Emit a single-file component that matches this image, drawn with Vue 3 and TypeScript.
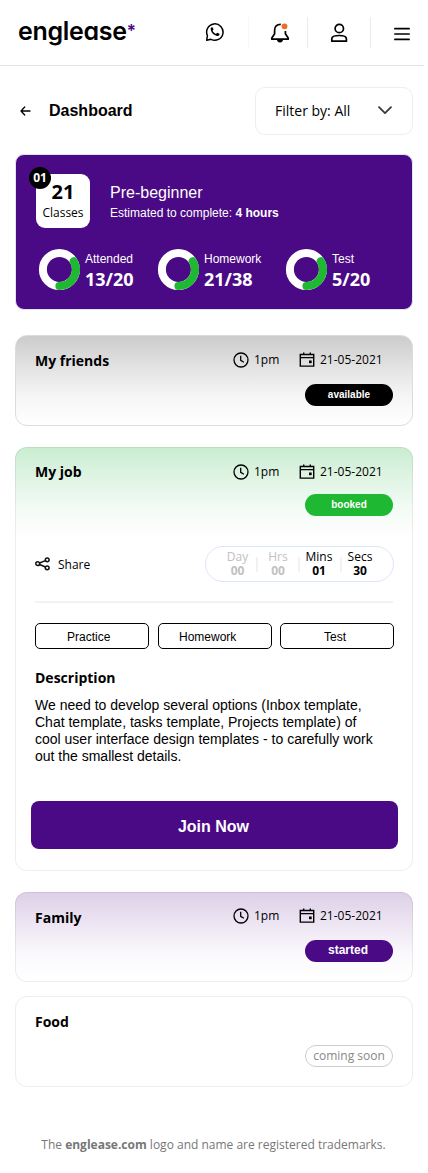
<script setup lang="ts">
interface Stat { label: string; value: string }
interface Lesson {
  id: string
  title: string
  status: string
  time?: string
  date?: string
}
interface Unit { label: string; value: string; muted: boolean }

const stats: Stat[] = [
  { label: 'Attended', value: '13/20' },
  { label: 'Homework', value: '21/38' },
  { label: 'Test', value: '5/20' },
]

const lessons: Lesson[] = [
  { id: 'friends', title: 'My friends', status: 'available', time: '1pm', date: '21-05-2021' },
  { id: 'job', title: 'My job', status: 'booked', time: '1pm', date: '21-05-2021' },
  { id: 'family', title: 'Family', status: 'started', time: '1pm', date: '21-05-2021' },
  { id: 'food', title: 'Food', status: 'coming soon' },
]

const countdown: Unit[] = [
  { label: 'Day', value: '00', muted: true },
  { label: 'Hrs', value: '00', muted: true },
  { label: 'Mins', value: '01', muted: false },
  { label: 'Secs', value: '30', muted: false },
]

const tabs: string[] = ['Practice', 'Homework', 'Test']
</script>

<template>
  <div class="page">
    <header class="topbar">
      <div class="logo">englease<span class="star">*</span></div>
      <nav class="actions">
        <button class="action whatsapp" aria-label="WhatsApp">
          <svg width="20" height="20" viewBox="0 0 20 20" fill="none">
            <path d="M1.7 18.3l.7-4.8A8.2 8.2 0 1 1 6 17.300z" stroke="#000" stroke-width="1.500" stroke-linejoin="round" />
            <path d="M6.900 5.300c-.9.3-1.400 1.200-1.200 2.200.6 3.200 3 5.700 6.300 6.500 1 .2 2-.3 2.400-1.200l.1-1-2.300-1.100-1.300 1.200c-1.600-.7-2.700-1.800-3.300-3.200l1-1.200-.9-2.100z" fill="#000" />
          </svg>
        </button>
        <button class="action bell" aria-label="Notifications">
          <svg width="20" height="20" viewBox="0 0 20 20" fill="none">
            <path d="M10.800 1.300C6.700 1.200 4.600 3.700 4.600 7.200v3.600L1.800 15v1.200h16.400V15l-2.800-4.200V8" stroke="#000" stroke-width="1.700" stroke-linejoin="round" />
            <path d="M7 16.500h6c0 1.800-1.300 3.100-3 3.100s-3-1.300-3-3.100z" fill="#000" />
            <circle cx="14.500" cy="3.300" r="2.900" fill="#f26a21" />
          </svg>
        </button>
        <button class="action user" aria-label="Account">
          <svg width="18" height="20" viewBox="0 0 18 20" fill="none" stroke="#000" stroke-width="1.700">
            <circle cx="9.300" cy="5.500" r="4.200" />
            <path d="M1.800 18.200v-2.400c0-2.100 3.300-3.300 7.300-3.300s7.300 1.200 7.300 3.300v2.400z" stroke-linejoin="round" />
          </svg>
        </button>
        <button class="action menu" aria-label="Menu">
          <svg width="16" height="14" viewBox="0 0 16 14" stroke="#000" stroke-width="1.700" stroke-linecap="round">
            <path d="M.9 1.700h14.200M.9 7h14.200M.9 12.400h14.200" />
          </svg>
        </button>
      </nav>
    </header>

    <div class="heading">
      <svg class="back" width="11" height="10" viewBox="0 0 11 10" fill="none" stroke="#000" stroke-width="1.300" stroke-linecap="round" stroke-linejoin="round">
        <path d="M10 5H1M4.700 1L1 5l3.700 4" />
      </svg>
      <h1>Dashboard</h1>
      <button class="filter">
        <span>Filter by: All</span>
        <svg width="14" height="9" viewBox="0 0 14 9" fill="none" stroke="#353540" stroke-width="1.700" stroke-linecap="round" stroke-linejoin="round">
          <path d="M1 1.200l6 6 6-6" />
        </svg>
      </button>
    </div>

    <section class="summary">
      <div class="level">
        <div class="classes">
          <span class="index">01</span>
          <strong>21</strong>
          <span>Classes</span>
        </div>
        <div class="about">
          <h2>Pre-beginner</h2>
          <p>Estimated to complete: <b>4 hours</b></p>
        </div>
      </div>
      <div class="stats">
        <div v-for="s in stats" :key="s.label" class="stat">
          <svg width="42" height="42" viewBox="0 0 42 42" fill="none">
            <circle cx="21.400" cy="21.400" r="16.500" stroke="#fff" stroke-width="8" />
            <path d="M35.700 13.200A16.500 16.500 0 0 1 21.400 37.900" stroke="#1eb833" stroke-width="8" stroke-linecap="round" />
          </svg>
          <div class="figures">
            <span>{{ s.label }}</span>
            <strong>{{ s.value }}</strong>
          </div>
        </div>
      </div>
    </section>

    <article v-for="l in lessons" :key="l.id" class="lesson" :class="l.id">
      <div class="lesson-head">
        <h3>{{ l.title }}</h3>
        <div v-if="l.time" class="when">
          <svg width="16" height="16" viewBox="0 0 16 16" fill="none" stroke="#000" stroke-width="1.300">
            <circle cx="8" cy="8" r="7" />
            <path d="M7.700 3.800v4.500l3.200 2" />
          </svg>
          <span class="time">{{ l.time }}</span>
          <svg width="16" height="16" viewBox="0 0 16 16" fill="none">
            <path d="M1.300 2.500h13.400v11.600H1.300z" stroke="#000" stroke-width="1.400" />
            <path d="M1.300 5.600h13.400M4.700.4v2.100M11.300.4v2.100" stroke="#000" stroke-width="1.400" />
            <path d="M10 8.500h2.700v2.700H10z" fill="#000" />
          </svg>
          <span>{{ l.date }}</span>
        </div>
      </div>
      <div class="badge">{{ l.status }}</div>

      <template v-if="l.id === 'job'">
        <div class="share-row">
          <div class="share">
            <svg width="16" height="14" viewBox="0 0 16 14" fill="none" stroke="#111" stroke-width="1.500">
              <circle cx="2.700" cy="6.700" r="1.900" />
              <circle cx="12.200" cy="2.800" r="1.900" />
              <circle cx="12.200" cy="10.800" r="1.900" />
              <path d="M4.600 6l5.800-2.400M4.600 7.500l5.800 2.500" />
            </svg>
            <span>Share</span>
          </div>
          <div class="countdown">
            <div v-for="u in countdown" :key="u.label" class="unit" :class="{ muted: u.muted }">
              <span>{{ u.label }}</span>
              <b>{{ u.value }}</b>
            </div>
          </div>
        </div>
        <div class="tabs">
          <button v-for="t in tabs" :key="t" :class="t.toLowerCase()">{{ t }}</button>
        </div>
        <h4>Description</h4>
        <p class="text">
          We need to develop several options (Inbox template,<br>
          Chat template, tasks template, Projects template) of<br>
          cool user interface design templates - to carefully work<br>
          out the smallest details.
        </p>
        <button class="join">Join Now</button>
      </template>
    </article>

    <footer>The <b>englease.com</b> logo and name are registered trademarks.</footer>
  </div>
</template>

<style>
body { margin: 0; background: #fff; }
</style>

<style scoped>
* { box-sizing: border-box; }
h1, h2, h3, h4, p { margin: 0; }
button { margin: 0; padding: 0; border: 0; background: none; font: inherit; color: inherit; }
svg { display: block; flex: none; }
.page {
  width: 428px;
  height: 1173px;
  overflow: hidden;
  color: #000;
  background: #fff;
  font-family: "Open Sans", "Noto Sans", sans-serif;
  font-size: 12px;
}
.topbar {
  display: flex;
  width: 424px;
  height: 66px;
  padding-left: 18px;
  border-bottom: 1px solid #e5e5e5;
}
.logo {
  width: 168px;
  padding-top: 16px;
  font-family: Inter, "Liberation Sans", sans-serif;
  font-size: 25px;
  line-height: 30px;
  font-weight: 600;
  letter-spacing: -0.3px;
  font-feature-settings: "cv11";
  white-space: nowrap;
}
.star { color: #4b0a85; font-size: 17px; line-height: 0; vertical-align: 3px; }
.actions { display: flex; height: 31px; margin-top: 17px; }
.action { display: flex; align-items: center; justify-content: flex-start; height: 31px; }
.whatsapp { width: 62px; padding: 0 0 2px 19px; }
.bell { width: 59px; padding-left: 21px; border-left: 1px solid #f7f7f7; }
.user { width: 63px; padding-left: 22px; border-left: 1px solid #ebebeb; }
.menu { width: 53px; padding: 2px 0 0 23px; border-left: 1px solid #ebebeb; }
.heading { display: flex; align-items: center; height: 48px; margin: 21px 15px 0 20px; }
h1 {
  flex: 1;
  margin-left: 18px;
  font: bold 16px/20px "Liberation Sans", sans-serif;
}
.filter {
  display: flex;
  align-items: center;
  justify-content: space-between;
  width: 158px;
  height: 48px;
  padding: 0 20px 1px 19px;
  border: 1px solid #eee;
  border-radius: 10px;
  font-size: 14px;
}
.summary {
  height: 156px;
  margin: 19px 15px 0;
  padding: 19px 20px 0;
  border: 1px solid #dce6fb;
  border-radius: 9px;
  color: #fff;
  background: #4b0a85;
}
.level { display: flex; }
.classes {
  position: relative;
  display: flex;
  flex-direction: column;
  align-items: center;
  width: 54px;
  height: 54px;
  padding-top: 6px;
  border-radius: 9px;
  color: #000;
  background: #fff;
}
.classes strong { font-size: 20px; line-height: 23px; }
.classes span:last-child { line-height: 20px; }
.index {
  position: absolute;
  left: -7px;
  top: -7px;
  width: 22px;
  height: 22px;
  border-radius: 50%;
  color: #fff;
  background: #000;
  font-size: 12px;
  line-height: 21px;
  font-weight: bold;
  text-align: center;
}
.about { padding: 9px 0 0 20px; font-family: "Liberation Sans", sans-serif; }
.about h2 { font-size: 16px; line-height: 20px; font-weight: normal; }
.about p { margin-top: 3px; font-size: 12px; line-height: 15px; }
.stats { display: grid; grid-template-columns: 119px 128px 1fr; padding: 20px 0 0 2px; }
.stat { display: flex; align-items: center; gap: 5px; height: 42px; }
.figures { padding-top: 5px; }
.stat span { display: block; font: 12px/15px "Liberation Sans", sans-serif; }
.stat strong { display: block; font-size: 18px; line-height: 24px; }
.lesson {
  height: 91px;
  margin: 0 15px;
  padding: 13px 19px 0;
  border: 1px solid #ededed;
  border-radius: 12px;
  background-origin: border-box;
  background-repeat: no-repeat;
}
.lesson-head { display: flex; justify-content: space-between; height: 24px; }
h3 { font-size: 14px; line-height: 24px; }
.when { display: flex; align-items: center; width: 160px; height: 22px; }
.when span { padding: 0 0 1px 5px; font-size: 12px; white-space: nowrap; }
.when .time { width: 50px; }
.badge {
  width: 88px;
  height: 22px;
  margin: 11px 0 0 auto;
  border-radius: 11px;
  color: #fff;
  text-align: center;
  font: bold 10px/21px "Liberation Sans", sans-serif;
}
.friends {
  margin-top: 25px;
  border-color: #dcdcdc;
  background-image: linear-gradient(#cbcbcb, #e1e1e1 33%, #f5f5f5 66%, #fff);
}
.friends .badge { background: #000; }
.job {
  height: 424px;
  margin-top: 21px;
  border-color: rgba(0, 0, 0, .065);
  background-image: linear-gradient(#c9edd0, #dff4e3 33%, #f3fbf5 66%, #fff);
  background-size: 100% 92px;
}
.job h3 { line-height: 22px; }
.job .badge { margin-top: 9px; background: #1eb833; }
.family {
  height: 90px;
  padding-top: 12px;
  margin-top: 21px;
  border-color: rgba(0, 0, 0, .065);
  background-image: linear-gradient(#dccfe7, #ece4f2 33%, #f9f7fb 66%, #fff 95%);
}
.family h3 { line-height: 25px; }
.family .badge { padding-right: 2px; background: #4b0a85; font-size: 12px; }
.food { margin-top: 14px; }
.food .badge {
  border: 1px solid #ccc;
  color: #888;
  font: 12px/20px "Open Sans", "Noto Sans", sans-serif;
}
.share-row {
  display: flex;
  justify-content: space-between;
  height: 57px;
  margin-top: 30px;
  border-bottom: 2px solid #f2f2f2;
}
.share { display: flex; align-items: center; gap: 7px; height: 36px; }
.countdown {
  display: grid;
  grid-template-columns: 39px 42px 42px 38px;
  width: 189px;
  height: 36px;
  margin-right: -1px;
  padding: 2px 0 0 12px;
  border: 1px solid #dce6fb;
  border-radius: 18px;
}
.unit { position: relative; text-align: center; padding-top: 1px; }
.unit span, .unit b { display: block; line-height: 14px; }
.unit:nth-child(3) { padding-right: 2px; }
.unit + .unit::before {
  content: "";
  position: absolute;
  left: -1px;
  top: 8px;
  width: 2px;
  height: 15px;
  background: #f2f2f2;
}
.muted { color: #c1c1c1; }
.tabs { display: grid; grid-template-columns: 123px 122px 114px; margin-top: 20px; }
.tabs button {
  width: 114px;
  height: 26px;
  padding-top: 1px;
  border: 1px solid #000;
  border-radius: 5px;
  font: 12px/14px "Liberation Sans", sans-serif;
  text-align: left;
}
.tabs .practice { padding-left: 31px; }
.tabs .homework { padding-left: 20px; }
.tabs .test { padding-left: 43px; }
h4 { margin-top: 18px; font-size: 14px; line-height: 22px; }
.text { margin-top: 8px; font: 14px/17px "Liberation Sans", sans-serif; white-space: nowrap; }
.join {
  width: 367px;
  height: 48px;
  margin: 36px 0 0 -4px;
  padding: 3px 2px 0 0;
  border-radius: 8px;
  color: #fff;
  background: #4b0a85;
  font: bold 16px/45px "Liberation Sans", sans-serif;
}
footer { width: 427px; margin-top: 49px; color: #777; text-align: center; line-height: 18px; }
</style>
